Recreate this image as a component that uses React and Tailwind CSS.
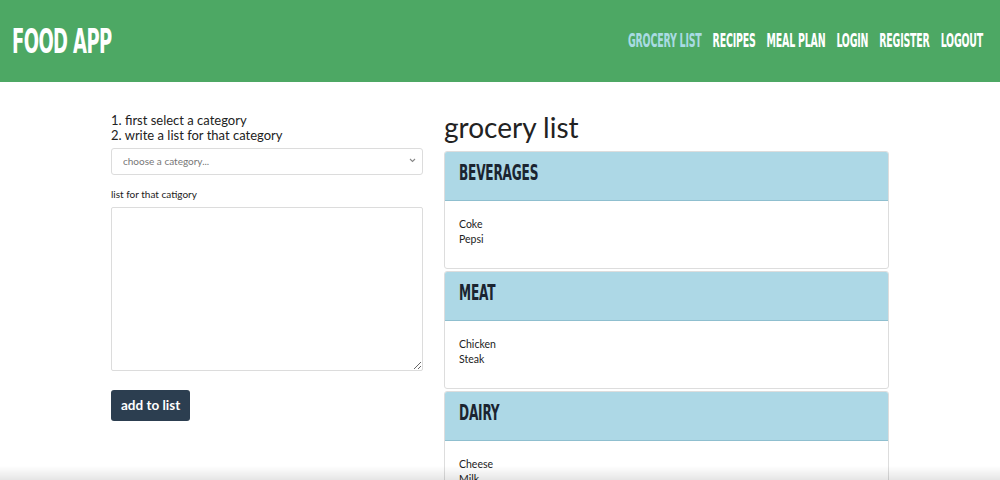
import React from 'react';

const groceries = [
  { name: 'BEVERAGES', items: ['Coke', 'Pepsi'] },
  { name: 'MEAT', items: ['Chicken', 'Steak'] },
  { name: 'DAIRY', items: ['Cheese', 'Milk'] },
];

const navLinks = ['GROCERY LIST', 'RECIPES', 'MEAL PLAN', 'LOGIN', 'REGISTER', 'LOGOUT'];

// no Bebas here, so a condensed face stretched tall
const display = "font-['DejaVu_Sans_Condensed',sans-serif] font-bold";

const App = () => {
  return (
    <div className="min-h-screen bg-white font-['Lato',sans-serif] text-[#222]">
      {/* HEADER */}
      <header className="h-[82px] bg-[#4da864] flex items-center justify-between pl-[12px] pr-[17px]">
        <h1 className={`${display} text-white text-[20px] tracking-[-0.6px] scale-y-[1.68] origin-center`}>FOOD APP</h1>
        <nav className="flex gap-[11px]">
          {navLinks.map((l, i) => (
            <a key={l} className={`${display} text-[10.5px] tracking-[-0.2px] scale-y-[1.8] ${i === 0 ? 'text-[#a9dbe3]' : 'text-white'}`}>{l}</a>
          ))}
        </nav>
      </header>

      <main className="flex justify-center gap-[21px] pt-[29px]">
        {/* FORM */}
        <div className="w-[312px] pt-[2px]">
          <p className="text-[13px] leading-[15px]">1. first select a category</p>
          <p className="text-[13px] leading-[15px]">2. write a list for that category</p>
          <div className="relative mt-[4px]">
            <select className="w-full h-[27px] border border-[#dcdcdc] rounded-[3px] pl-[11px] text-[10px] text-[#777] appearance-none bg-white outline-none">
              <option>choose a category...</option>
            </select>
            <svg className="absolute right-[7px] top-[11px]" width="7" height="5" viewBox="0 0 7 5">
              <path d="M1 1l2.5 2.5L6 1" stroke="#888" strokeWidth="1.1" fill="none" />
            </svg>
          </div>
          <p className="text-[10px] mt-[12px]">list for that catigory</p>
          <textarea className="block w-full h-[164px] mt-[5px] border border-[#dcdcdc] rounded-[2px] outline-none" />
          <button className="mt-[19px] bg-[#2c3e50] text-white font-bold text-[13.5px] px-[10px] h-[31px] rounded-[3px]">add to list</button>
        </div>

        {/* GROCERY LIST */}
        <div className="w-[445px]">
          <h2 className="text-[28px] leading-[30px] mt-[1px] mb-[9px]">grocery list</h2>
          <div className="flex flex-col gap-[2px]">
            {groceries.map((g) => (
              <div key={g.name} className="border border-[#dddddd] rounded-[3px] overflow-hidden">
                <div className="h-[49px] bg-[#add8e6] border-b border-[#8fbfcf] flex items-center px-[14px] pb-[7px]">
                  <h3 className={`${display} text-[13.5px] text-[#1b2430] tracking-[-0.2px] scale-y-[1.55] origin-left`}>{g.name}</h3>
                </div>
                <div className="h-[67px] px-[14px] pt-[16px] text-[10.5px] leading-[15px]">
                  {g.items.map((it) => (
                    <div key={it}>{it}</div>
                  ))}
                </div>
              </div>
            ))}
          </div>
        </div>
      </main>

      <div className="fixed left-0 right-0 bottom-0 h-[14px] bg-gradient-to-b from-transparent to-black/10 pointer-events-none" />
    </div>
  );
};

export default App;
